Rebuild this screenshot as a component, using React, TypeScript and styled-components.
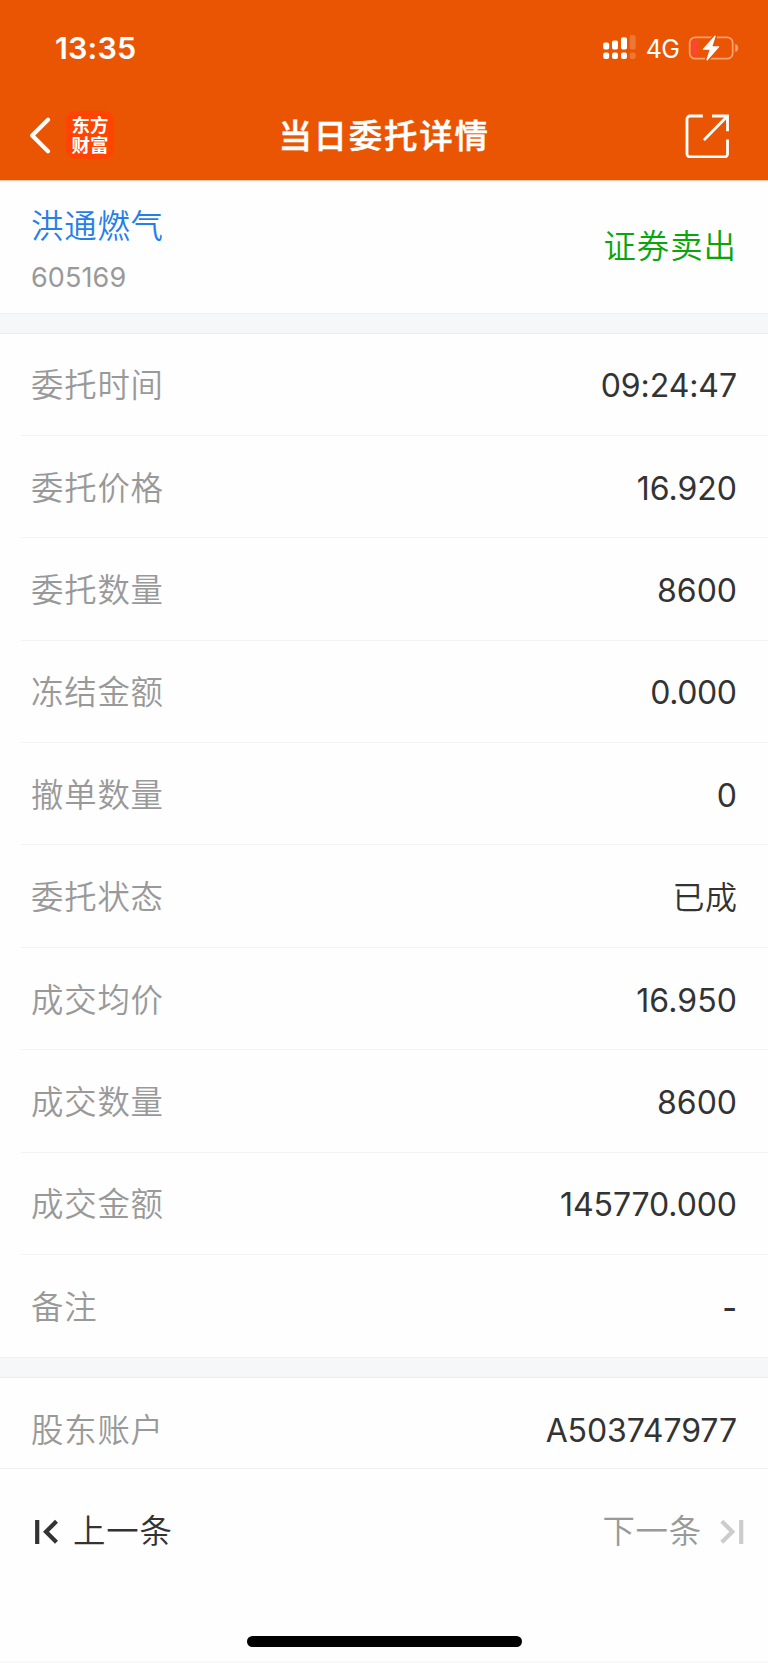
import React from "react";
import styled, { createGlobalStyle } from "styled-components";

const GlobalStyle = createGlobalStyle`
  * { box-sizing: border-box; }
  body {
    margin: 0;
    background: #fefefe;
    font-family: Inter, "Noto Sans CJK SC", sans-serif;
  }
`;

const Screen = styled.main`
  width: 768px;
  height: 1663px;
  display: flex;
  flex-direction: column;
  overflow: hidden;
  background: #fefefe;
  border-bottom: 2px solid #f9f9f9;
`;

const Header = styled.header`
  flex: none;
  height: 181px;
  background: #ea5504;
  border-bottom: 1px solid #fbc5a8;
  color: #fff;
`;

const StatusBar = styled.div`
  height: 92px;
  padding: 3px 29px 0 55px;
  display: flex;
  align-items: center;
  justify-content: space-between;
`;

const Clock = styled.span`
  font-size: 30.5px;
  line-height: 36px;
  font-weight: 600;
  letter-spacing: 0.15px;
`;

const StatusIcons = styled.div`
  display: flex;
  align-items: center;
`;

const Network = styled.span`
  font-size: 25px;
  line-height: 30px;
  margin: 2px 9px 0 10px;
  letter-spacing: -0.8px;
`;

const NavBar = styled.div`
  height: 88px;
  padding: 0 39px 0 29px;
  display: grid;
  grid-template-columns: 1fr auto 1fr;
  align-items: center;
`;

const NavStart = styled.div`
  display: flex;
  align-items: center;
  gap: 15px;
  margin-top: -2px;
`;

const NavEnd = styled.div`
  display: flex;
  justify-content: flex-end;
`;

const BrandTile = styled.div`
  width: 48px;
  height: 48px;
  border-radius: 9px;
  background: #ff4400;
  display: flex;
  flex-direction: column;
  align-items: center;
  justify-content: center;
  font-size: 18.5px;
  line-height: 20.5px;
  font-weight: 700;
`;

const Title = styled.h1`
  margin: 0 0 0 10px;
  font-size: 33.5px;
  line-height: 48px;
  font-weight: 500;
  letter-spacing: 1.7px;
  -webkit-text-stroke: 0.5px #fff;
  white-space: nowrap;
`;

const Stock = styled.section`
  flex: none;
  height: 132px;
  padding: 0 31px 0 31px;
  display: flex;
  justify-content: space-between;
`;

const StockName = styled.div`
  margin-top: 22px;
  font-size: 32.4px;
  line-height: 48px;
  font-weight: 350;
  letter-spacing: 0.8px;
  color: #267fe8;
`;

const StockCode = styled.div`
  margin-top: 11px;
  font-size: 27px;
  line-height: 32px;
  letter-spacing: 0.1px;
  color: #999;
`;

const Side = styled.div`
  margin-top: 42px;
  font-size: 32.4px;
  line-height: 48px;
  font-weight: 350;
  letter-spacing: 1px;
  color: #0aa50a;
`;

const Band = styled.div`
  flex: none;
  height: 20.5px;
  background: #f6f7f9;
  border-top: 1px solid #eff0f2;
  border-bottom: 1px solid #ebedee;
`;

const Rows = styled.dl`
  flex: none;
  margin: 0;
  padding-left: 21px;
`;

const Row = styled.div<{ $height: number; $line: boolean; $drop: number }>`
  height: ${(p) => p.$height}px;
  padding: ${(p) => p.$drop}px 31px 0 10px;
  display: flex;
  align-items: center;
  justify-content: space-between;
  border-bottom: ${(p) => (p.$line ? "1px solid #f3f3f3" : "none")};
`;

const Label = styled.dt`
  font-size: 32.4px;
  line-height: 48px;
  font-weight: 350;
  letter-spacing: 0.8px;
  color: #999;
`;

const Value = styled.dd<{ $tracking: number; $weight?: number }>`
  margin: 0;
  font-size: 32px;
  line-height: 48px;
  font-weight: ${(p) => p.$weight ?? 400};
  letter-spacing: ${(p) => p.$tracking}px;
  margin-right: ${(p) => -p.$tracking}px;
  color: #333;
`;

const Footer = styled.footer`
  flex: none;
  height: 127px;
  padding: 0 24px 0 34px;
  display: flex;
  align-items: center;
  justify-content: space-between;
  border-top: 1px solid #f0f0f0;
`;

const Step = styled.button<{ $disabled?: boolean }>`
  border: 0;
  padding: 0;
  background: none;
  display: flex;
  align-items: center;
  gap: ${(p) => (p.$disabled ? 18 : 15)}px;
  font: inherit;
  font-size: 32.4px;
  line-height: 48px;
  font-weight: 350;
  letter-spacing: 0.8px;
  color: ${(p) => (p.$disabled ? "#999" : "#333")};
`;

const HomeIndicator = styled.div`
  flex: none;
  width: 275px;
  height: 11px;
  margin: 40.5px 0 0 247px;
  border-radius: 6px;
  background: #000;
`;

const Signal = () => (
  <svg width="33" height="25" viewBox="0 0 33 25" fill="#fff">
    <rect x="0.2" y="7.5" width="6" height="7" rx="1.8" />
    <rect x="9" y="5.5" width="6" height="9" rx="1.8" />
    <rect x="18" y="2.3" width="6" height="12.2" rx="1.8" />
    <rect x="0.2" y="17.5" width="6" height="6.5" rx="2" />
    <rect x="9" y="17.5" width="6" height="6.5" rx="2" />
    <rect x="18" y="17.5" width="6" height="6.5" rx="2" />
    <g opacity="0.2">
      <rect x="26.7" y="0" width="6" height="14.5" rx="1.8" />
      <rect x="26.7" y="17.5" width="6" height="6.5" rx="2" />
    </g>
  </svg>
);

const Battery = () => (
  <svg width="51" height="26" viewBox="0 0 51 26">
    <rect x="1.7" y="2.3" width="43" height="21.4" rx="5.5" fill="none" stroke="#f5a171" strokeWidth="1.8" />
    <path d="M47.2 9c4 1 4 7 0 8z" fill="#f5a171" />
    <rect x="4.3" y="5" width="5.2" height="15.5" rx="2" fill="#ff453a" />
    <path
      d="M26.4 1 15 13.7c-.3.5-.1 1 .4 1h6.2L18.4 24.6c-.1.8.7 1.2 1.2.6L31 12.3c.4-.5.2-1.1-.5-1.1h-6L27.6 1.5c.2-.9-.7-1.2-1.2-.5Z"
      fill="#fff"
      stroke="#ea5504"
      strokeWidth="3"
      paintOrder="stroke"
    />
  </svg>
);

const BackIcon = () => (
  <svg width="22" height="38" viewBox="0 0 22 38" fill="none" stroke="#fff" strokeWidth="4.2" strokeLinecap="round" strokeLinejoin="round">
    <path d="M19 3.7 3.2 19.5 19 35.2" />
  </svg>
);

const ShareIcon = () => (
  <svg width="44" height="44" viewBox="0 0 44 44" fill="none" stroke="#fff" strokeWidth="2.8">
    <path d="M17.8 2H5a3 3 0 0 0-3 3v35a3 3 0 0 0 3 3h34.5a3 3 0 0 0 3-3V25.5M27 2h15.5v15.3" />
    <path d="M42 2.5 19.7 25.3" strokeLinecap="round" />
  </svg>
);

const StepIcon = ({ next }: { next?: boolean }) => (
  <svg width="24" height="26" viewBox="0 0 24 26" fill="none" stroke={next ? "#ccc" : "#333"} strokeWidth="4.2">
    {next ? <path d="M1.8 2.3 12.3 12.8 1.8 23.3M21.2 1v24" /> : <path d="M3.2 1v24M22.5 2.3 12 12.8 22.5 23.3" />}
  </svg>
);

const details: { label: string; value: string; tracking: number; weight?: number }[] = [
  { label: "委托时间", value: "09:24:47", tracking: -0.1 },
  { label: "委托价格", value: "16.920", tracking: 0 },
  { label: "委托数量", value: "8600", tracking: 0 },
  { label: "冻结金额", value: "0.000", tracking: -0.4 },
  { label: "撤单数量", value: "0", tracking: 0 },
  { label: "委托状态", value: "已成", tracking: 0.6, weight: 350 },
  { label: "成交均价", value: "16.950", tracking: 0.1 },
  { label: "成交数量", value: "8600", tracking: 0 },
  { label: "成交金额", value: "145770.000", tracking: -0.1 },
  { label: "备注", value: "-", tracking: 0, weight: 500 },
];

export default function App() {
  return (
    <Screen>
      <GlobalStyle />
      <Header>
        <StatusBar>
          <Clock>13:35</Clock>
          <StatusIcons>
            <Signal />
            <Network>4G</Network>
            <Battery />
          </StatusIcons>
        </StatusBar>
        <NavBar>
          <NavStart>
            <BackIcon />
            <BrandTile>
              <span>东方</span>
              <span>财富</span>
            </BrandTile>
          </NavStart>
          <Title>当日委托详情</Title>
          <NavEnd>
            <ShareIcon />
          </NavEnd>
        </NavBar>
      </Header>
      <Stock>
        <div>
          <StockName>洪通燃气</StockName>
          <StockCode>605169</StockCode>
        </div>
        <Side>证券卖出</Side>
      </Stock>
      <Band />
      <Rows>
        {details.map((d, i) => (
          <Row key={d.label} $height={102.4} $line={i < details.length - 1} $drop={4}>
            <Label>{d.label}</Label>
            <Value $tracking={d.tracking} $weight={d.weight}>{d.value}</Value>
          </Row>
        ))}
      </Rows>
      <Band />
      <Rows>
        <Row $height={90.4} $line={false} $drop={15}>
          <Label>股东账户</Label>
          <Value $tracking={-0.1}>A503747977</Value>
        </Row>
      </Rows>
      <Footer>
        <Step>
          <StepIcon />
          上一条
        </Step>
        <Step $disabled>
          下一条
          <StepIcon next />
        </Step>
      </Footer>
      <HomeIndicator />
    </Screen>
  );
}
